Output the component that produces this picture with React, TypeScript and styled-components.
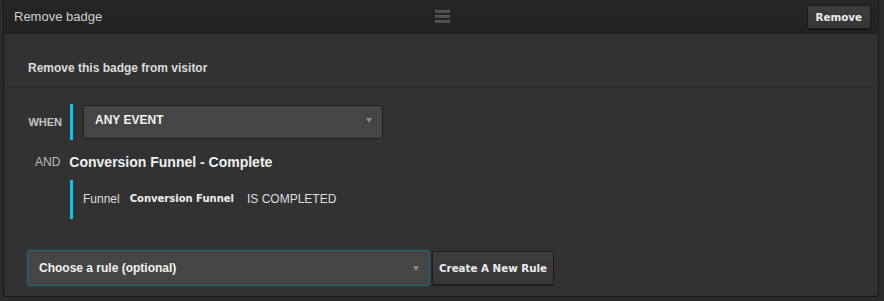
import React from "react";
import styled, { createGlobalStyle } from "styled-components";

const GlobalStyle = createGlobalStyle`
  html, body {
    margin: 0;
    padding: 0;
    background: #2b2b2b;
    font-family: "Liberation Sans", Arial, sans-serif;
  }
`;

const Panel = styled.div`
  width: 874px;
  height: 296px;
  margin: 0 0 0 3px;
  border: 1px solid #171717;
  border-top: none;
  border-radius: 0 0 4px 4px;
  background: #323232;
  overflow: hidden;
  display: flex;
  flex-direction: column;
`;

const Header = styled.div`
  height: 33px;
  display: grid;
  grid-template-columns: 1fr auto 1fr;
  align-items: center;
  padding: 0 7px 0 10px;
  background: linear-gradient(#262626, #222222);
  border-bottom: 1px solid #1c1c1c;
`;

const Title = styled.div`
  color: #cfcfcf;
  font-size: 13px;
`;

const Grip = styled.div`
  display: flex;
  flex-direction: column;
  gap: 2px;
  span {
    display: block;
    width: 15px;
    height: 2px;
    background: #4e4e4e;
    border-top: 1px solid #555;
  }
`;

const HeaderRight = styled.div`
  display: flex;
  justify-content: flex-end;
`;

const Button = styled.button<{ tall?: boolean }>`
  height: ${({ tall }) => (tall ? "34px" : "24px")};
  padding: 0 ${({ tall }) => (tall ? "6px" : "8px")};
  background: linear-gradient(#3d3d3d, #363636);
  border: 1px solid #1d1d1d;
  border-radius: 2px;
  box-shadow: 0 1px 1px rgba(0, 0, 0, 0.4);
  color: #ececec;
  font-family: "DejaVu Sans", sans-serif;
  font-weight: bold;
  font-size: 10.3px;
  cursor: pointer;
`;

const Intro = styled.div`
  padding: 26px 0 11px 24px;
  color: #dcdcdc;
  font-weight: bold;
  font-size: 12px;
  line-height: 16px;
  border-bottom: 1px solid #2a2a2a;
`;

const Rules = styled.div`
  padding: 16px 0 0 0;
  display: flex;
  flex-direction: column;
`;

const Row = styled.div<{ gap?: number }>`
  display: grid;
  grid-template-columns: 66px auto;
  align-items: center;
  margin-top: ${({ gap }) => gap ?? 0}px;
`;

const AndRow = styled.div`
  display: flex;
  align-items: center;
  gap: 9px;
  padding-left: 31px;
  margin-top: 14px;
`;

const Label = styled.div<{ small?: boolean }>`
  justify-self: end;
  padding-right: ${({ small }) => (small ? "8px" : "0")};
  color: ${({ small }) => (small ? "#c4c4c4" : "#bdbdbd")};
  font-size: ${({ small }) => (small ? "11px" : "12px")};
  font-weight: ${({ small }) => (small ? "bold" : "normal")};
`;

const Accent = styled.div<{ h?: number }>`
  display: flex;
  align-items: center;
  border-left: 3px solid #11c4f0;
  padding-left: 10px;
  min-height: ${({ h }) => h ?? 36}px;
`;

const Select = styled.div<{ focus?: boolean; w: number }>`
  box-sizing: border-box;
  width: ${({ w }) => w}px;
  height: ${({ focus }) => (focus ? "36px" : "34px")};
  display: flex;
  align-items: center;
  justify-content: space-between;
  padding: 0 10px 0 11px;
  background: #454545;
  border: 1px solid ${({ focus }) => (focus ? "#1f6878" : "#1f1f1f")};
  border-radius: 3px;
  box-shadow: ${({ focus }) => (focus ? "0 0 2px #1c5664" : "none")};
  color: #f2f2f2;
  font-size: 12px;
  font-weight: bold;
`;

const SelectText = styled.span<{ lift?: boolean }>`
  margin-top: ${({ lift }) => (lift ? "-4px" : "0")};
`;

const Caret = styled.span<{ lift?: boolean }>`
  width: 0;
  height: 0;
  border-left: 3px solid transparent;
  border-right: 3px solid transparent;
  border-top: 5px solid #8a8a8a;
  margin-top: ${({ lift }) => (lift ? "-4px" : "0")};
`;

const Heading = styled.div`
  color: #f0f0f0;
  font-size: 14px;
  font-weight: bold;
`;

const Condition = styled.div`
  display: flex;
  align-items: center;
  gap: 10px;
  color: #dedede;
  font-size: 12px;
  margin-top: -2px;
`;

const Value = styled.span`
  font-family: "DejaVu Sans", sans-serif;
  font-size: 10px;
  font-weight: bold;
  color: #f0f0f0;
  margin-right: 3px;
`;

const Footer = styled.div`
  display: flex;
  align-items: center;
  gap: 2px;
  padding: 31px 0 0 23px;
`;

export default function App() {
  return (
    <>
      <GlobalStyle />
      <Panel>
        <Header>
          <Title>Remove badge</Title>
          <Grip>
            <span />
            <span />
            <span />
          </Grip>
          <HeaderRight>
            <Button>Remove</Button>
          </HeaderRight>
        </Header>
        <Intro>Remove this badge from visitor</Intro>
        <Rules>
          <Row>
            <Label small>WHEN</Label>
            <Accent>
              <Select w={300}>
                <SelectText lift>ANY EVENT</SelectText>
                <Caret lift />
              </Select>
            </Accent>
          </Row>
          <AndRow>
            <Label>AND</Label>
            <Heading>Conversion Funnel - Complete</Heading>
          </AndRow>
          <Row gap={10}>
            <span />
            <Accent h={39}>
              <Condition>
                <span>Funnel</span>
                <Value>Conversion Funnel</Value>
                <span>IS COMPLETED</span>
              </Condition>
            </Accent>
          </Row>
        </Rules>
        <Footer>
          <Select focus w={403}>
            <SelectText>Choose a rule (optional)</SelectText>
            <Caret />
          </Select>
          <Button tall>Create A New Rule</Button>
        </Footer>
      </Panel>
    </>
  );
}
